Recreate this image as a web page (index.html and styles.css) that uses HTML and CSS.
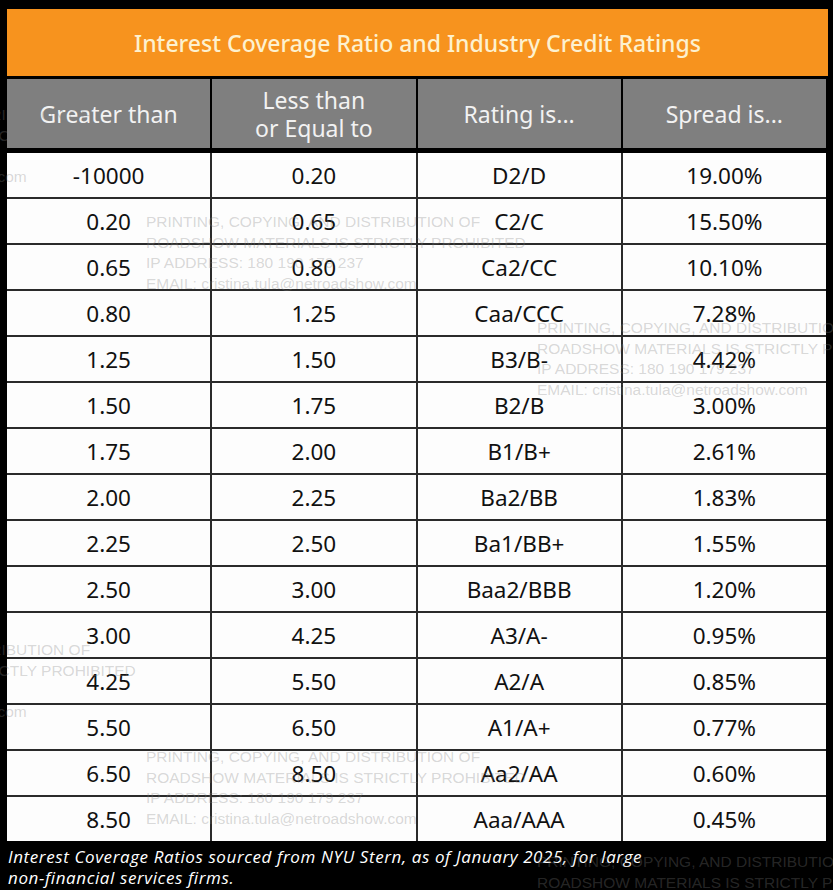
FILE: index.html
```html
<!DOCTYPE html>
<html lang="en">
<head>
<meta charset="utf-8">
<title>Interest Coverage Ratio and Industry Credit Ratings</title>
<link rel="stylesheet" href="styles.css">
</head>
<body>
<div class="page">
  <div class="ratings">
    <div class="title">Interest Coverage Ratio and Industry Credit Ratings</div>
    <div class="head">
      <div class="hcell">Greater than</div>
      <div class="hcell">Less than<br>or Equal to</div>
      <div class="hcell">Rating is...</div>
      <div class="hcell">Spread is...</div>
    </div>
    <div class="rows">
      <div class="cell">-10000</div><div class="cell">0.20</div><div class="cell">D2/D</div><div class="cell">19.00%</div>
      <div class="cell">0.20</div><div class="cell">0.65</div><div class="cell">C2/C</div><div class="cell">15.50%</div>
      <div class="cell">0.65</div><div class="cell">0.80</div><div class="cell">Ca2/CC</div><div class="cell">10.10%</div>
      <div class="cell">0.80</div><div class="cell">1.25</div><div class="cell">Caa/CCC</div><div class="cell">7.28%</div>
      <div class="cell">1.25</div><div class="cell">1.50</div><div class="cell">B3/B-</div><div class="cell">4.42%</div>
      <div class="cell">1.50</div><div class="cell">1.75</div><div class="cell">B2/B</div><div class="cell">3.00%</div>
      <div class="cell">1.75</div><div class="cell">2.00</div><div class="cell">B1/B+</div><div class="cell">2.61%</div>
      <div class="cell">2.00</div><div class="cell">2.25</div><div class="cell">Ba2/BB</div><div class="cell">1.83%</div>
      <div class="cell">2.25</div><div class="cell">2.50</div><div class="cell">Ba1/BB+</div><div class="cell">1.55%</div>
      <div class="cell">2.50</div><div class="cell">3.00</div><div class="cell">Baa2/BBB</div><div class="cell">1.20%</div>
      <div class="cell">3.00</div><div class="cell">4.25</div><div class="cell">A3/A-</div><div class="cell">0.95%</div>
      <div class="cell">4.25</div><div class="cell">5.50</div><div class="cell">A2/A</div><div class="cell">0.85%</div>
      <div class="cell">5.50</div><div class="cell">6.50</div><div class="cell">A1/A+</div><div class="cell">0.77%</div>
      <div class="cell">6.50</div><div class="cell">8.50</div><div class="cell">Aa2/AA</div><div class="cell">0.60%</div>
      <div class="cell">8.50</div><div class="cell"></div><div class="cell">Aaa/AAA</div><div class="cell">0.45%</div>
    </div>
  </div>
  <p class="note">Interest Coverage Ratios sourced from NYU Stern, as of January 2025, for large<br>non-financial services firms.</p>
</div>

<div class="wm wm-a">PRINTING, COPYING, AND DISTRIBUTION OF<br>ROADSHOW MATERIALS IS STRICTLY PROHIBITED<br>IP ADDRESS: 180 190 179 237<br>EMAIL: cristina.tula@netroadshow.com</div>
<div class="wm wm-b">PRINTING, COPYING, AND DISTRIBUTION OF<br>ROADSHOW MATERIALS IS STRICTLY PROHIBITED<br>IP ADDRESS: 180 190 179 237<br>EMAIL: cristina.tula@netroadshow.com</div>
<div class="wm wm-c">PRINTING, COPYING, AND DISTRIBUTION OF<br>ROADSHOW MATERIALS IS STRICTLY PROHIBITED<br>IP ADDRESS: 180 190 179 237<br>EMAIL: cristina.tula@netroadshow.com</div>
<div class="wm wm-d">PRINTING, COPYING, AND DISTRIBUTION OF<br>ROADSHOW MATERIALS IS STRICTLY PROHIBITED<br>IP ADDRESS: 180 190 179 237<br>EMAIL: cristina.tula@netroadshow.com</div>
<div class="wm wm-e">PRINTING, COPYING, AND DISTRIBUTION OF<br>ROADSHOW MATERIALS IS STRICTLY PROHIBITED<br>IP ADDRESS: 180 190 179 237<br>EMAIL: cristina.tula@netroadshow.com</div>
<div class="wm wm-f">PRINTING, COPYING, AND DISTRIBUTION OF<br>ROADSHOW MATERIALS IS STRICTLY PROHIBITED<br>IP ADDRESS: 180 190 179 237<br>EMAIL: cristina.tula@netroadshow.com</div>
</body>
</html>
```

FILE: styles.css
```css
html, body {
  margin: 0;
  padding: 0;
}

body {
  background: #000;
  width: 833px;
  height: 890px;
  overflow: hidden;
  position: relative;
  font-family: "Noto Sans", "Open Sans", sans-serif;
}

.page {
  padding: 9px 5px 0 7px;
}

.ratings {
  width: 821px;
}

.title {
  background: #f7931e;
  height: 67px;
  display: flex;
  align-items: center;
  justify-content: center;
  color: #fdf1cf;
  font-size: 23px;
  font-weight: 500;
}

.head {
  display: grid;
  grid-template-columns: repeat(4, 1fr);
  column-gap: 2px;
  width: 819px;
  margin-top: 3px;
}

.hcell {
  background: #7f7f7f;
  height: 69px;
  display: flex;
  align-items: center;
  justify-content: center;
  text-align: center;
  color: #f2f2f2;
  font-size: 23px;
  line-height: 28px;
}

.rows {
  display: grid;
  grid-template-columns: repeat(4, 1fr);
  gap: 2px;
  width: 819px;
  margin-top: 5px;
  background: #2a2a2a;
}

.cell {
  background: #fdfdfd;
  height: 44px;
  display: flex;
  align-items: center;
  justify-content: center;
  color: #111;
  font-size: 22.5px;
}

.note {
  margin: 5px 0 0 1px;
  color: #fff;
  font-family: "Open Sans", "Noto Sans", sans-serif;
  font-style: italic;
  font-size: 17px;
  letter-spacing: 0.6px;
  line-height: 21px;
}

.wm {
  position: absolute;
  white-space: nowrap;
  font-family: "Liberation Sans", Arial, sans-serif;
  font-size: 15.5px;
  line-height: 20.5px;
  color: rgba(128, 128, 128, 0.3);
  pointer-events: none;
}

.wm-a { left: -244px; top: 105px; }
.wm-b { left: 146px; top: 212px; }
.wm-c { left: 537px; top: 318px; }
.wm-d { left: -244px; top: 640px; }
.wm-e { left: 146px; top: 747px; }
.wm-f { left: 537px; top: 852px; }
```
